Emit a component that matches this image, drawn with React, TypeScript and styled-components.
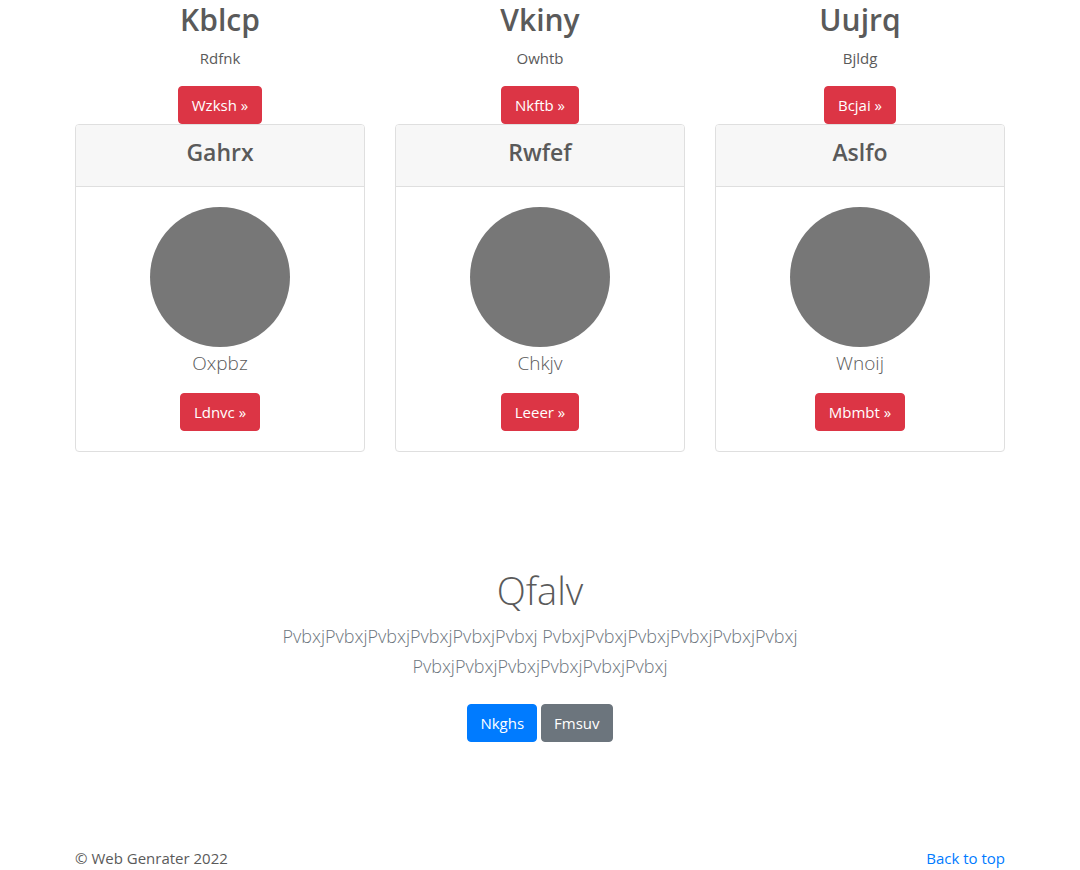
import React from "react";
import styled, { createGlobalStyle } from "styled-components";

const GlobalStyle = createGlobalStyle`
  *, *::before, *::after { box-sizing: border-box; }
  body {
    margin: 0;
    background: #fff;
    color: #5a5a5a;
    font-family: "Segoe UI", "Open Sans", "Noto Sans", sans-serif;
    font-size: 16px;
    line-height: 24px;
  }
  h1, h2, h4, p { margin: 0; }
`;

const Container = styled.div`
  width: 100%;
  max-width: 960px;
  margin: 0 auto;
  padding: 0 15px;
`;

const Columns = styled.div`
  display: grid;
  grid-template-columns: repeat(3, 1fr);
  gap: 30px;
`;

const Column = styled.section`
  display: flex;
  flex-direction: column;
  align-items: center;
  text-align: center;
`;

const ColumnTitle = styled.h2`
  margin-bottom: 6px;
  font-size: 30px;
  font-weight: 600;
  line-height: 40px;
`;

const ColumnText = styled.p`
  margin-bottom: 16px;
  font-size: 15px;
  line-height: 24px;
`;

const tones = { danger: "#dc3545", primary: "#007bff", secondary: "#6c757d" };

const Button = styled.button<{ $tone: keyof typeof tones }>`
  padding: 6px 12px;
  border: 1px solid ${(p) => tones[p.$tone]};
  border-radius: 4px;
  background: ${(p) => tones[p.$tone]};
  color: #fff;
  font-family: inherit;
  font-size: 15px;
  line-height: 24px;
  cursor: pointer;
`;

const DetailButton = styled(Button).attrs({ type: "button", $tone: "danger" })`
  padding: 6px 13px;
`;

const Card = styled.article`
  border: 1px solid #dfdfdf;
  border-radius: 4px;
  overflow: hidden;
  background: #fff;
  text-align: center;
`;

const CardHeader = styled.header`
  padding: 12px 20px 18px;
  border-bottom: 1px solid #dfdfdf;
  background: #f7f7f7;
`;

const CardTitle = styled.h4`
  font-size: 23px;
  font-weight: 600;
  line-height: 31px;
`;

const CardBody = styled.div`
  display: flex;
  flex-direction: column;
  align-items: center;
  padding: 20px;
`;

const Portrait = styled.div`
  width: 140px;
  height: 140px;
  border-radius: 50%;
  background: #777;
`;

const Lead = styled.p`
  font-weight: 300;
`;

const CardLead = styled(Lead)`
  margin-bottom: 14px;
  font-size: 19px;
  line-height: 32px;
`;

const Banner = styled.section`
  max-width: 640px;
  margin: 0 auto;
  padding: 113px 15px 104px;
  text-align: center;
`;

const BannerTitle = styled.h1`
  margin-bottom: 6px;
  font-size: 38px;
  font-weight: 300;
  line-height: 50px;
`;

const BannerLead = styled(Lead)`
  margin-bottom: 23px;
  color: #6c757d;
  font-size: 18px;
  line-height: 30px;
`;

const Actions = styled.div`
  display: flex;
  justify-content: center;
  gap: 4px;
`;

const Footer = styled.footer`
  display: flex;
  justify-content: space-between;
  font-size: 15px;
`;

const TopLink = styled.a`
  color: #007bff;
  text-decoration: none;
`;

const features = [
  { title: "Kblcp", text: "Rdfnk", action: "Wzksh »" },
  { title: "Vkiny", text: "Owhtb", action: "Nkftb »" },
  { title: "Uujrq", text: "Bjldg", action: "Bcjai »" },
];

const cards = [
  { title: "Gahrx", text: "Oxpbz", action: "Ldnvc »" },
  { title: "Rwfef", text: "Chkjv", action: "Leeer »" },
  { title: "Aslfo", text: "Wnoij", action: "Mbmbt »" },
];

const word = "Pvbxj".repeat(6);

export default function App() {
  return (
    <>
      <GlobalStyle />
      <Container>
        <main>
          <Columns>
            {features.map((f) => (
              <Column key={f.title}>
                <ColumnTitle>{f.title}</ColumnTitle>
                <ColumnText>{f.text}</ColumnText>
                <DetailButton>{f.action}</DetailButton>
              </Column>
            ))}
          </Columns>
          <Columns>
            {cards.map((c) => (
              <Card key={c.title}>
                <CardHeader>
                  <CardTitle>{c.title}</CardTitle>
                </CardHeader>
                <CardBody>
                  <Portrait />
                  <CardLead>{c.text}</CardLead>
                  <DetailButton>{c.action}</DetailButton>
                </CardBody>
              </Card>
            ))}
          </Columns>
          <Banner>
            <BannerTitle>Qfalv</BannerTitle>
            <BannerLead>{[word, word, word].join(" ")}</BannerLead>
            <Actions>
              <Button type="button" $tone="primary">Nkghs</Button>
              <Button type="button" $tone="secondary">Fmsuv</Button>
            </Actions>
          </Banner>
        </main>
        <Footer>
          <span>© Web Genrater 2022</span>
          <TopLink href="#">Back to top</TopLink>
        </Footer>
      </Container>
    </>
  );
}
